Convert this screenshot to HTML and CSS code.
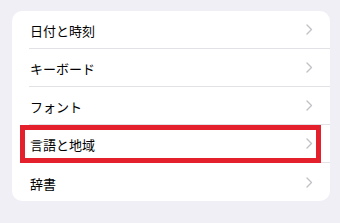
FILE: index.html
```html
<!DOCTYPE html>
<html lang="ja">
<head>
  <meta charset="UTF-8" />
  <meta name="viewport" content="width=device-width, initial-scale=1.0"/>
  <title>一般</title>
  <link rel="stylesheet" href="styles.css">
</head>
<body>
  <ul class="settings-list">
    <li class="row">
      <span class="label">日付と時刻</span>
      <svg class="chevron" width="7" height="11" viewBox="0 0 7 11"><polyline points="1,1 5.5,5.5 1,10" /></svg>
    </li>
    <li class="row">
      <span class="label">キーボード</span>
      <svg class="chevron" width="7" height="11" viewBox="0 0 7 11"><polyline points="1,1 5.5,5.5 1,10" /></svg>
    </li>
    <li class="row">
      <span class="label">フォント</span>
      <svg class="chevron" width="7" height="11" viewBox="0 0 7 11"><polyline points="1,1 5.5,5.5 1,10" /></svg>
    </li>
    <li class="row highlighted">
      <span class="label">言語と地域</span>
      <svg class="chevron" width="7" height="11" viewBox="0 0 7 11"><polyline points="1,1 5.5,5.5 1,10" /></svg>
      <div class="mark"></div>
    </li>
    <li class="row">
      <span class="label">辞書</span>
      <svg class="chevron" width="7" height="11" viewBox="0 0 7 11"><polyline points="1,1 5.5,5.5 1,10" /></svg>
    </li>
  </ul>
</body>
</html>
```

FILE: styles.css
```css
* { margin: 0; padding: 0; box-sizing: border-box; }
html, body { height: 100%; }
body {
  background: #f0eff5;
  font-family: "Noto Sans CJK JP", "Noto Sans", sans-serif;
  color: #000;
  padding: 11px 10px 0 12px;
}
.settings-list {
  list-style: none;
  background: #fff;
  border-radius: 10px;
  overflow: hidden;
}
.row {
  position: relative;
  height: 38px;
  margin-left: 17px;
  padding-right: 17px;
  display: flex;
  align-items: center;
  justify-content: space-between;
  border-bottom: 1px solid #e2e2e6;
}
.row:last-child { border-bottom: none; }
.label {
  font-size: 13px;
  padding-left: 1px;
  padding-top: 2px;
}
.chevron {
  fill: none;
  stroke: #c2c2c6;
  stroke-width: 1.4;
  stroke-linecap: round;
  stroke-linejoin: round;
}
.mark {
  position: absolute;
  left: -9px;
  right: 9px;
  top: 0;
  bottom: -1px;
  border: 5px solid #e3202c;
}
```
